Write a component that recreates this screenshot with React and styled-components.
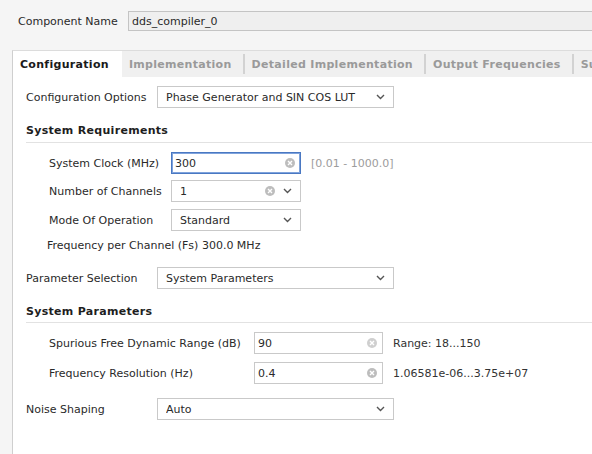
import styled, { createGlobalStyle } from "styled-components";

const GlobalStyle = createGlobalStyle`
  html, body {
    margin: 0;
    padding: 0;
    background: #f5f5f5;
  }
  body {
    font-family: "DejaVu Sans", "Liberation Sans", sans-serif;
    font-size: 11px;
    color: #2a2a2a;
  }
`;

const Page = styled.div`
  width: 592px;
  height: 454px;
  overflow: hidden;
  background: #f5f5f5;
`;

const NameRow = styled.div`
  display: flex;
  align-items: center;
  height: 20px;
  padding: 11px 0 0 18px;
`;

const NameLabel = styled.span`
  width: 110px;
  flex: none;
`;

const NameInput = styled.div`
  flex: 1;
  height: 18px;
  display: flex;
  align-items: center;
  padding-left: 3px;
  background: #efefef;
  border: 1px solid #c4c4c4;
  border-right: none;
`;

const Panel = styled.div`
  margin: 19px 0 0 12px;
  border-left: 1px solid #cfcfcf;
  border-top: 1px solid #dcdcdc;
  height: 420px;
  background: #fff;
`;

const TabStrip = styled.div`
  display: flex;
  height: 26px;
  background: #f0f0f0;
  white-space: nowrap;
  overflow: hidden;
`;

const Tab = styled.div`
  flex: none;
  display: flex;
  align-items: center;
  padding: 0 13px 0 7px;
  font-weight: bold;
  letter-spacing: 0.3px;
  color: ${(p) => (p.$active ? "#1a1a1a" : "#9a9a9a")};
  background: ${(p) => (p.$active ? "#fff" : "transparent")};
  position: relative;
  &::after {
    content: "";
    position: absolute;
    right: 0;
    top: 3px;
    bottom: 3px;
    width: 2px;
    background: ${(p) => (p.$sep ? "#d2d2d2" : "transparent")};
  }
`;

const Content = styled.div`
  padding: 9px 0 0 13px;
`;

const Row = styled.div`
  display: flex;
  align-items: center;
  height: 22px;
  margin-top: ${(p) => p.$mt || 0}px;
  padding-left: ${(p) => p.$indent || 0}px;
`;

const Label = styled.span`
  width: ${(p) => p.$w}px;
  flex: none;
`;

const Field = styled.div`
  box-sizing: border-box;
  width: ${(p) => p.$w}px;
  height: 22px;
  flex: none;
  display: flex;
  align-items: center;
  padding: 0 ${(p) => (p.$select ? 8 : 5)}px 0 ${(p) => (p.$select ? 8 : 3)}px;
  border: 1px solid ${(p) => (p.$focus ? "#4a78c2" : "#c9c9c9")};
  box-shadow: ${(p) => (p.$focus ? "inset 0 0 0 1px #7fa3dc" : "none")};
  background: #fff;
  gap: 8px;
`;

const FieldText = styled.span`
  flex: 1;
  white-space: nowrap;
  overflow: hidden;
`;

const Hint = styled.span`
  margin-left: 10px;
  color: ${(p) => (p.$muted ? "#9c9c9c" : "#333")};
  white-space: nowrap;
`;

const Heading = styled.div`
  margin-top: ${(p) => p.$mt}px;
  padding-bottom: ${(p) => p.$pb}px;
  border-bottom: 1px solid #e2e2e2;
  font-weight: bold;
  letter-spacing: 0.3px;
  line-height: 14px;
  color: #1e1e1e;
`;

const Note = styled.div`
  margin-top: 8px;
  padding-left: 21px;
  line-height: 14px;
`;

const Chevron = () => (
  <svg width="9" height="6" viewBox="0 0 9 6">
    <path d="M1 1 L4.5 4.5 L8 1" fill="none" stroke="#555" strokeWidth="1.4" />
  </svg>
);

const Clear = ({ light }) => (
  <svg width="10" height="10" viewBox="0 0 10 10">
    <circle cx="5" cy="5" r="5" fill={light ? "#cfcfcf" : "#bdbdbd"} />
    <path d="M3 3 L7 7 M7 3 L3 7" stroke="#fff" strokeWidth="1.4" />
  </svg>
);

const Select = ({ w, value, clear }) => (
  <Field $w={w} $select>
    <FieldText>{value}</FieldText>
    {clear && <Clear />}
    <Chevron />
  </Field>
);

const TextField = ({ w, value, focus, light }) => (
  <Field $w={w} $focus={focus}>
    <FieldText>{value}</FieldText>
    <Clear light={light} />
  </Field>
);

export default function App() {
  return (
    <Page>
      <GlobalStyle />
      <NameRow>
        <NameLabel>Component Name</NameLabel>
        <NameInput>dds_compiler_0</NameInput>
      </NameRow>
      <Panel>
        <TabStrip>
          <Tab $active>Configuration</Tab>
          <Tab $sep>Implementation</Tab>
          <Tab $sep>Detailed Implementation</Tab>
          <Tab $sep>Output Frequencies</Tab>
          <Tab>Summary</Tab>
        </TabStrip>
        <Content>
          <Row>
            <Label $w={131}>Configuration Options</Label>
            <Select w={237} value="Phase Generator and SIN COS LUT" />
          </Row>

          <Heading $mt={16} $pb={4}>System Requirements</Heading>
          <Row $mt={9} $indent={23}>
            <Label $w={122}>System Clock (MHz)</Label>
            <TextField w={130} value="300" focus />
            <Hint $muted>[0.01 - 1000.0]</Hint>
          </Row>
          <Row $mt={6} $indent={23}>
            <Label $w={122}>Number of Channels</Label>
            <Select w={130} value="1" clear />
          </Row>
          <Row $mt={7} $indent={23}>
            <Label $w={122}>Mode Of Operation</Label>
            <Select w={130} value="Standard" />
          </Row>
          <Note>Frequency per Channel (Fs) 300.0 MHz</Note>

          <Row $mt={14}>
            <Label $w={131}>Parameter Selection</Label>
            <Select w={237} value="System Parameters" />
          </Row>

          <Heading $mt={16} $pb={3}>System Parameters</Heading>
          <Row $mt={9} $indent={23}>
            <Label $w={205}>Spurious Free Dynamic Range (dB)</Label>
            <TextField w={129} value="90" light />
            <Hint>Range: 18...150</Hint>
          </Row>
          <Row $mt={8} $indent={23}>
            <Label $w={205}>Frequency Resolution (Hz)</Label>
            <TextField w={129} value="0.4" />
            <Hint>1.06581e-06...3.75e+07</Hint>
          </Row>

          <Row $mt={14}>
            <Label $w={131}>Noise Shaping</Label>
            <Select w={237} value="Auto" />
          </Row>
        </Content>
      </Panel>
    </Page>
  );
}
